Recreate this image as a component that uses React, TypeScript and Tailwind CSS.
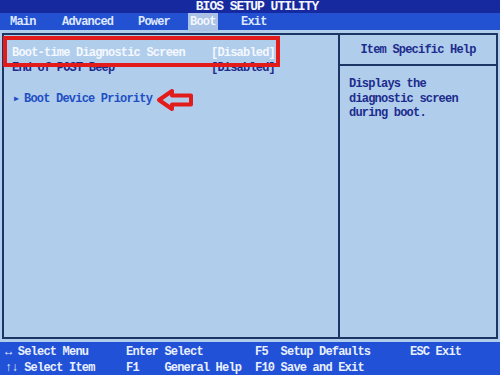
export default function App() {
  const tabs = [
    { label: "Main", w: "w-[52px]" },
    { label: "Advanced", w: "w-[76px]" },
    { label: "Power", w: "w-[55px]" },
    { label: "Boot", w: "w-[48px]" },
    { label: "Exit", w: "w-[40px]" },
  ]

  return (
    <div
      className="relative w-[500px] h-[375px] overflow-hidden flex flex-col bg-[#b1cdec] text-[12px] font-bold leading-none tracking-[-0.8px]"
      style={{ fontFamily: '"Liberation Mono", "DejaVu Sans Mono", monospace' }}
    >
      {/* title bar */}
      <div className="h-[13px] bg-[#17299e] flex items-center justify-center pl-[14px]">
        <span className="text-[#f4f6ff] text-[13px] tracking-[-1px]">BIOS SETUP UTILITY</span>
      </div>

      {/* menu tabs */}
      <div className="h-[17px] bg-[#2252d2] flex items-center pl-[5px]">
        {tabs.map((t) => (
          <div key={t.label} className={`${t.w} flex`}>
            <span
              className={
                t.label === "Boot"
                  ? "px-[2px] py-[3px] bg-[#a9c2e6] text-[#f2f6ff]"
                  : "px-[5px] text-[#dfe8ff]"
              }
            >
              {t.label}
            </span>
          </div>
        ))}
      </div>

      {/* main panel */}
      <div className="flex-1 px-[2px] pt-[3px] pb-[3px]">
        <div className="h-full border-2 border-[#1d3564] flex">
          <div className="w-[336px] border-r-2 border-[#1d3564] flex flex-col pl-[8px] pt-[9px]">
            <div className="h-[17px] flex items-center text-[#f4f8ff]">
              <span className="w-[199px]">Boot-time Diagnostic Screen</span>
              <span>[Disabled]</span>
            </div>
            <div className="h-[14px] flex items-center text-[#1c2c8c]">
              <span className="w-[199px]">End of POST Beep</span>
              <span>[Disabled]</span>
            </div>
            <div className="h-[16px] mt-[16px] flex items-center text-[#1f4fc4]">
              <span className="text-[8px] mr-[6px] ml-[2px]">▶</span>
              <span>Boot Device Priority</span>
            </div>
          </div>
          <div className="flex-1 flex flex-col">
            <div className="h-[31px] border-b-2 border-[#1d3564] flex items-center justify-center text-[#1c2c8c]">
              Item Specific Help
            </div>
            <div className="pl-[9px] pt-[11px] text-[#1c2c8c] leading-[14.5px]">
              <div>Displays the</div>
              <div>diagnostic screen</div>
              <div>during boot.</div>
            </div>
          </div>
        </div>
      </div>

      {/* key help bar */}
      <div className="h-[33px] bg-[#2151d6] text-[#e8efff] flex flex-col justify-center gap-[4px] pl-[5px] pt-[2px]">
        <div className="flex">
          <span className="w-[121px]">↔ Select Menu</span>
          <span className="w-[129px]">Enter Select</span>
          <span className="w-[155px]">F5&nbsp;&nbsp;Setup Defaults</span>
          <span>ESC Exit</span>
        </div>
        <div className="flex">
          <span className="w-[121px]">↑↓ Select Item</span>
          <span className="w-[129px]">F1&nbsp;&nbsp;&nbsp;&nbsp;General Help</span>
          <span>F10 Save and Exit</span>
        </div>
      </div>

      {/* red annotation box */}
      <div className="absolute left-[3px] top-[36px] w-[277px] h-[31px] border-[4px] border-[#e21b1b]" />

      {/* red annotation arrow */}
      <svg className="absolute left-[155px] top-[87px]" width="40" height="26" viewBox="0 0 40 26">
        <path
          d="M4 13 L17 4 L17 8.5 L36 8.5 L36 17.5 L17 17.5 L17 22 Z"
          fill="none"
          stroke="#e21b1b"
          strokeWidth="4"
          strokeLinejoin="round"
        />
      </svg>
    </div>
  )
}
